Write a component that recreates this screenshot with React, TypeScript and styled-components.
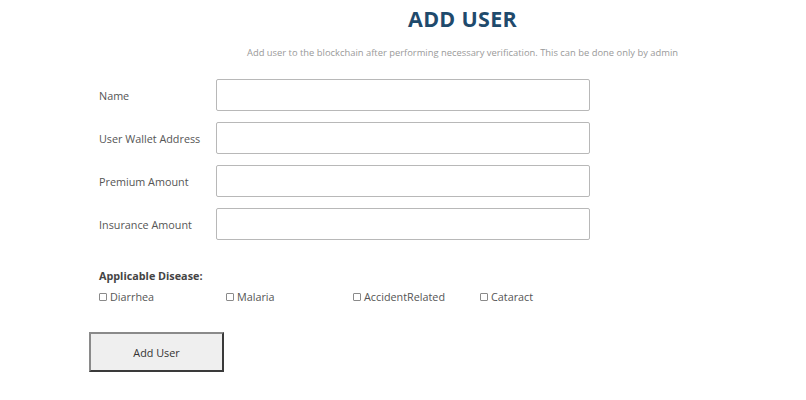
import styled, { createGlobalStyle } from "styled-components";

const GlobalStyle = createGlobalStyle`
  html, body {
    margin: 0;
    padding: 0;
    background: #ffffff;
    font-family: "Open Sans", "Liberation Sans", sans-serif;
  }
`;

const fields = [
  "Name",
  "User Wallet Address",
  "Premium Amount",
  "Insurance Amount",
];

const diseases = ["Diarrhea", "Malaria", "AccidentRelated", "Cataract"];

const App: React.FC = () => {
  return (
    <>
      <GlobalStyle />
      <Page>
        <Header>
          <Title>ADD USER</Title>
          <Subtitle>
            Add user to the blockchain after performing necessary verification.
            This can be done only by admin
          </Subtitle>
        </Header>

        <Form>
          {fields.map((f) => (
            <Row key={f}>
              <Label>{f}</Label>
              <Input type="text" />
            </Row>
          ))}
        </Form>

        <Section>
          <SectionTitle>Applicable Disease:</SectionTitle>
          <Checks>
            {diseases.map((d) => (
              <CheckLabel key={d}>
                <Box type="checkbox" />
                {d}
              </CheckLabel>
            ))}
          </Checks>
        </Section>

        <Button>Add User</Button>
      </Page>
    </>
  );
};

export default App;

const Page = styled.div`
  width: 806px;
  height: 400px;
  box-sizing: border-box;
  padding: 5px 0 0 89px;
  display: flex;
  flex-direction: column;
  align-items: flex-start;
`;

const Header = styled.div`
  align-self: stretch;
  margin-left: 30px;
  display: flex;
  flex-direction: column;
  align-items: center;
`;

const Title = styled.h1`
  margin: 0;
  font-family: "Open Sans", "Liberation Sans", sans-serif;
  font-size: 21.5px;
  line-height: 28px;
  font-weight: 700;
  color: #1f4a6c;
  letter-spacing: 0.3px;
`;

const Subtitle = styled.p`
  margin: 13px 0 0;
  font-size: 9.4px;
  line-height: 14px;
  color: #9a9a9a;
`;

const Form = styled.div`
  margin: 19px 0 0 10px;
  display: flex;
  flex-direction: column;
  gap: 11px;
`;

const Row = styled.div`
  display: flex;
  align-items: center;
`;

const Label = styled.label`
  width: 117px;
  font-size: 10.8px;
  color: #555;
`;

const Input = styled.input`
  width: 374px;
  height: 32px;
  box-sizing: border-box;
  border: 1px solid #b8b8b8;
  border-radius: 2px;
  background: #fff;
  outline: none;
`;

const Section = styled.div`
  margin: 28px 0 0 10px;
  display: flex;
  flex-direction: column;
  gap: 6px;
`;

const SectionTitle = styled.div`
  font-size: 10.8px;
  font-weight: 700;
  color: #444;
  line-height: 16px;
`;

const Checks = styled.div`
  display: grid;
  grid-template-columns: repeat(4, 127px);
`;

const CheckLabel = styled.label`
  display: flex;
  align-items: center;
  gap: 3px;
  font-size: 10.8px;
  color: #555;
  line-height: 14px;
`;

const Box = styled.input`
  appearance: none;
  margin: 0;
  width: 8px;
  height: 8px;
  border: 1px solid #8a8a8a;
  border-radius: 1px;
  background: #fff;
`;

const Button = styled.button`
  margin-top: 28px;
  width: 135px;
  height: 40px;
  box-sizing: border-box;
  background: #efefef;
  border: 2px solid;
  border-color: #8a8a8a #3a3a3a #3a3a3a #8a8a8a;
  font-family: "Open Sans", "Liberation Sans", sans-serif;
  font-size: 10.8px;
  color: #333;
`;
